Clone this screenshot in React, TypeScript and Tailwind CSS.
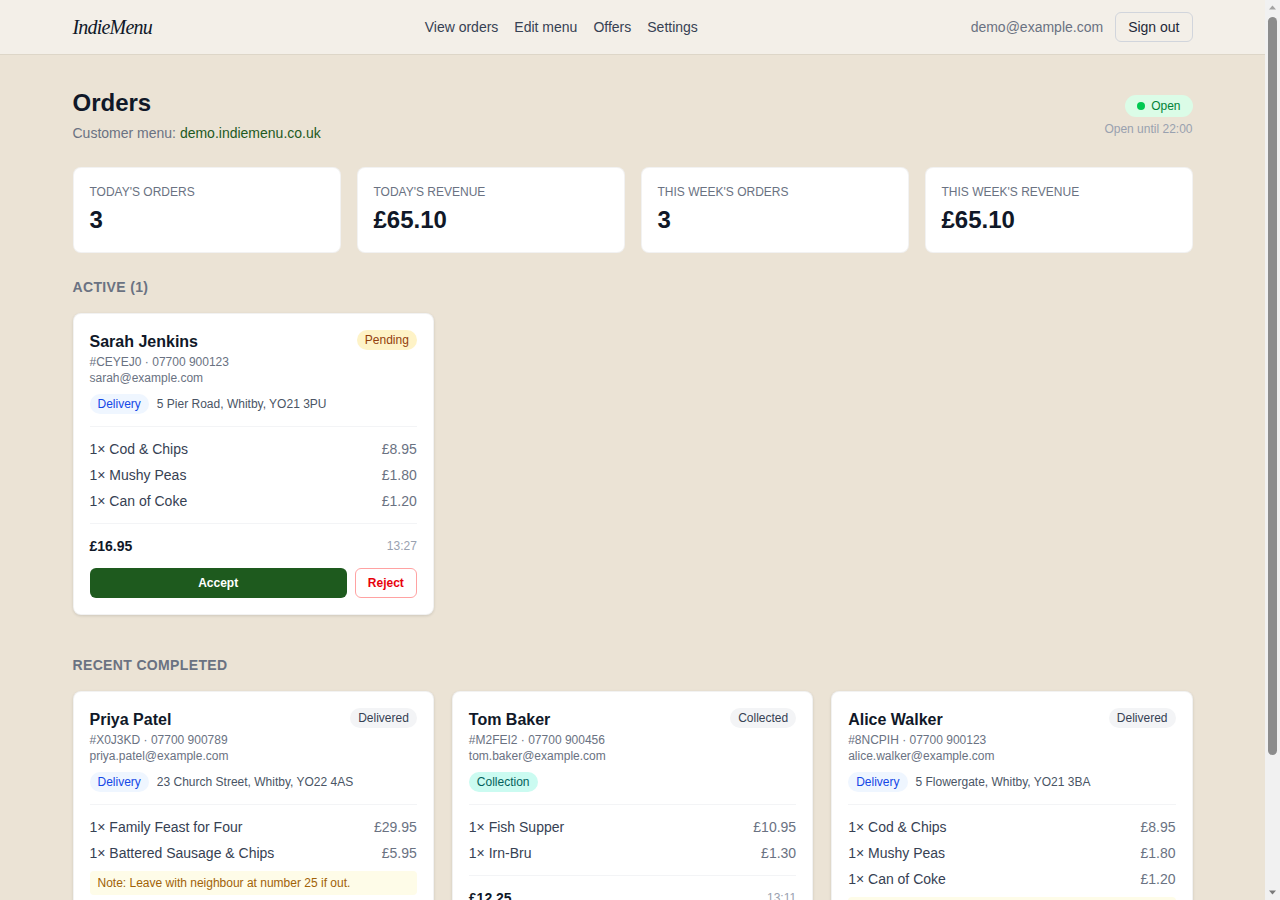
type Item = { name: string; price: string };

type Order = {
  name: string;
  ref: string;
  phone: string;
  email: string;
  kind: "Delivery" | "Collection";
  address?: string;
  status: "Pending" | "Delivered" | "Collected";
  items: Item[];
  note?: string;
  total: string;
  time: string;
};

const active: Order[] = [
  {
    name: "Sarah Jenkins",
    ref: "#CEYEJ0",
    phone: "07700 900123",
    email: "sarah@example.com",
    kind: "Delivery",
    address: "5 Pier Road, Whitby, YO21 3PU",
    status: "Pending",
    items: [
      { name: "Cod & Chips", price: "£8.95" },
      { name: "Mushy Peas", price: "£1.80" },
      { name: "Can of Coke", price: "£1.20" },
    ],
    total: "£16.95",
    time: "13:27",
  },
];

const completed: Order[] = [
  {
    name: "Priya Patel",
    ref: "#X0J3KD",
    phone: "07700 900789",
    email: "priya.patel@example.com",
    kind: "Delivery",
    address: "23 Church Street, Whitby, YO22 4AS",
    status: "Delivered",
    items: [
      { name: "Family Feast for Four", price: "£29.95" },
      { name: "Battered Sausage & Chips", price: "£5.95" },
    ],
    note: "Note: Leave with neighbour at number 25 if out.",
    total: "£35.90",
    time: "12:48",
  },
  {
    name: "Tom Baker",
    ref: "#M2FEI2",
    phone: "07700 900456",
    email: "tom.baker@example.com",
    kind: "Collection",
    status: "Collected",
    items: [
      { name: "Fish Supper", price: "£10.95" },
      { name: "Irn-Bru", price: "£1.30" },
    ],
    total: "£12.25",
    time: "13:11",
  },
  {
    name: "Alice Walker",
    ref: "#8NCPIH",
    phone: "07700 900123",
    email: "alice.walker@example.com",
    kind: "Delivery",
    address: "5 Flowergate, Whitby, YO21 3BA",
    status: "Delivered",
    items: [
      { name: "Cod & Chips", price: "£8.95" },
      { name: "Mushy Peas", price: "£1.80" },
      { name: "Can of Coke", price: "£1.20" },
    ],
    note: "Note: Please ring the bell, door is round the back.",
    total: "£11.95",
    time: "12:02",
  },
];

const stats = [
  { label: "Today's orders", value: "3" },
  { label: "Today's revenue", value: "£65.10" },
  { label: "This week's orders", value: "3" },
  { label: "This week's revenue", value: "£65.10" },
];

function StatusBadge({ status }: { status: Order["status"] }) {
  if (status === "Pending") {
    return (
      <span className="block shrink-0 rounded-full bg-[#fef3c7] px-2 py-0.5 text-xs text-[#92400e]">
        Pending
      </span>
    );
  }
  return (
    <span className="block shrink-0 rounded-full bg-gray-100 px-2 py-0.5 text-xs text-gray-700">
      {status}
    </span>
  );
}

function OrderCard({ order, actions }: { order: Order; actions?: boolean }) {
  return (
    <div className="rounded-lg border border-black/5 bg-white p-4 shadow-[0_1px_3px_rgba(0,0,0,0.12)]">
      <div className="flex items-start justify-between">
        <div>
          <div className="text-base leading-6 font-bold text-gray-900">{order.name}</div>
          <div className="text-xs text-gray-500">
            {order.ref} · {order.phone}
          </div>
          <div className="text-xs text-gray-500">{order.email}</div>
        </div>
        <StatusBadge status={order.status} />
      </div>

      <div className="mt-2 flex items-center gap-2">
        {order.kind === "Delivery" ? (
          <span className="rounded-full bg-blue-50 px-2 py-0.5 text-xs text-blue-700">
            Delivery
          </span>
        ) : (
          <span className="rounded-full bg-teal-100 px-2 py-0.5 text-xs text-teal-800">
            Collection
          </span>
        )}
        {order.address && (
          <span className="text-xs text-gray-600">{order.address}</span>
        )}
      </div>

      {/* Items */}
      <div className="mt-3 space-y-1.5 border-t border-gray-100 pt-3">
        {order.items.map((item) => (
          <div
            key={item.name}
            className="flex justify-between text-sm text-gray-700"
          >
            <span>1× {item.name}</span>
            <span className="text-gray-500">{item.price}</span>
          </div>
        ))}
      </div>

      {order.note && (
        <div className="mt-2 rounded bg-[#fefce8] px-2 py-1 text-xs text-[#a16207]">
          {order.note}
        </div>
      )}

      <div className="mt-3 flex items-center justify-between border-t border-gray-100 pt-3">
        <span className="text-sm font-bold text-gray-900">{order.total}</span>
        <span className="text-xs text-gray-400">{order.time}</span>
      </div>

      {actions && (
        <div className="mt-3 flex gap-2">
          <button className="flex-1 rounded-md bg-[#1e5a1e] py-1.5 text-xs font-bold text-white">
            Accept
          </button>
          <button className="rounded-md border border-red-300 bg-white px-3 py-1.5 text-xs font-bold text-red-600">
            Reject
          </button>
        </div>
      )}
    </div>
  );
}

// window scrollbar as it shows in the screenshot
function Scrollbar() {
  return (
    <div className="flex w-[15px] shrink-0 flex-col items-center bg-[#f1f1f1]">
      <svg width="15" height="15" viewBox="0 0 15 15" className="shrink-0">
        <path d="M4 9.5 L7.5 5.5 L11 9.5 Z" fill="#a3a3a3" />
      </svg>
      <div className="mt-0.5 h-[738px] w-[9px] rounded-full bg-[#8c8c8c]" />
      <div className="flex-1" />
      <svg width="15" height="15" viewBox="0 0 15 15" className="shrink-0">
        <path d="M4 5.5 L7.5 9.5 L11 5.5 Z" fill="#7a7a7a" />
      </svg>
    </div>
  );
}

export default function App() {
  return (
    <div
      className="flex h-screen bg-[#ebe3d5]"
      style={{ fontFamily: '"Liberation Sans", Arial, sans-serif' }}
    >
      <div className="flex-1 overflow-y-auto">
        {/* Header */}
        <header className="border-b border-[#ddd6c8] bg-[#f3efe8]">
          <div className="mx-auto flex max-w-6xl items-center justify-between px-4 py-3">
            <span
              className="text-xl tracking-[-0.04em] text-gray-900 italic"
              style={{ fontFamily: '"Liberation Serif", "Times New Roman", serif' }}
            >
              IndieMenu
            </span>
            <nav className="flex items-center gap-4 text-sm text-gray-700">
              <a href="#">View orders</a>
              <a href="#">Edit menu</a>
              <a href="#">Offers</a>
              <a href="#">Settings</a>
            </nav>
            <div className="flex items-center gap-3">
              <span className="text-sm text-gray-500">demo@example.com</span>
              <button className="rounded-md border border-gray-300 px-3 py-1 text-sm text-gray-800">
                Sign out
              </button>
            </div>
          </div>
        </header>

        <main className="mx-auto max-w-6xl px-4 pt-8 pb-10">
          <div className="flex items-start justify-between">
            <div>
              <h1 className="text-2xl font-bold text-gray-900">Orders</h1>
              <p className="mt-1 text-sm text-gray-500">
                Customer menu:{" "}
                <a href="#" className="text-[#1e5a1e]">
                  demo.indiemenu.co.uk
                </a>
              </p>
            </div>
            <div className="flex flex-col items-end pt-2">
              <span className="flex items-center gap-1.5 rounded-full bg-green-100 px-3 py-0.5 text-xs leading-[18px] text-green-700">
                <span className="h-2 w-2 rounded-full bg-green-500" />
                Open
              </span>
              <span className="mt-1 text-xs text-gray-400">Open until 22:00</span>
            </div>
          </div>

          {/* Stats */}
          <div className="mt-6 grid grid-cols-4 gap-4">
            {stats.map((s) => (
              <div
                key={s.label}
                className="rounded-lg border border-black/5 bg-white p-4"
              >
                <div className="text-xs text-gray-500 uppercase">{s.label}</div>
                <div className="mt-1 text-2xl font-bold text-gray-900">{s.value}</div>
              </div>
            ))}
          </div>

          <h2 className="mt-6 mb-4 text-sm font-bold tracking-wide text-gray-500 uppercase">
            Active (1)
          </h2>
          <div className="grid grid-cols-3 gap-[18px]">
            {active.map((o) => (
              <OrderCard key={o.ref} order={o} actions />
            ))}
          </div>

          <h2 className="mt-10 mb-4 text-sm font-bold tracking-wide text-gray-500 uppercase">
            Recent completed
          </h2>
          <div className="grid grid-cols-3 items-start gap-[18px]">
            {completed.map((o) => (
              <OrderCard key={o.ref} order={o} />
            ))}
          </div>
        </main>
      </div>
      <Scrollbar />
    </div>
  );
}
